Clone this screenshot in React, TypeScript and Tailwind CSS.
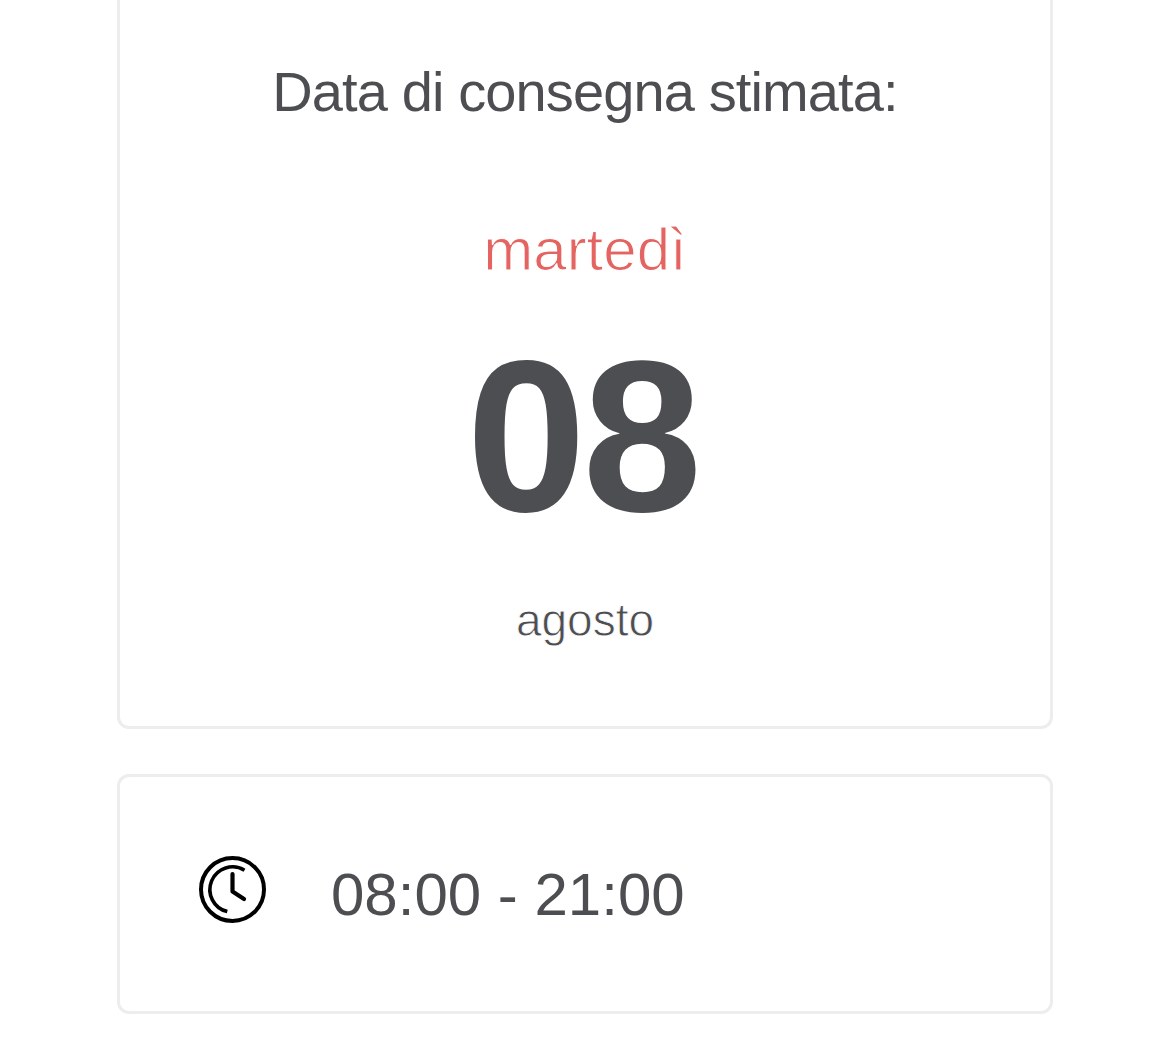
function ClockIcon() {
  return (
    <svg viewBox="0 0 68 68" className="mb-[10px] h-[68px] w-[68px] shrink-0 text-black" fill="none" stroke="currentColor" strokeWidth="4" aria-hidden="true">
      <circle cx="34.5" cy="34.5" r="31.5" />
      <path d="M46.5 15.2A22.7 22.7 0 1 0 29.3 56.6" strokeWidth="3.6" />
      <path d="M34.5 19V36.5L46 44" strokeWidth="4.2" strokeLinecap="round" strokeLinejoin="round" />
    </svg>
  );
}

function DeliveryDate() {
  return (
    <section className="flex h-[729px] flex-col items-center rounded-b-xl border-3 border-t-0 border-[#ededed] pt-[60px]">
      <h1 className="text-[56px] leading-[64px] tracking-[-0.88px] whitespace-nowrap text-[#4d4e52]">
        Data di consegna stimata:
      </h1>
      {/* the white stroke thins the regular weight down to a light one */}
      <p className="mt-[90px] text-[60px] leading-[72px] text-[#e36460] [-webkit-text-stroke:1.1px_#fff]">
        martedì
      </p>
      <p className="mt-[31px] mr-[5px] text-[215px] leading-[240px] font-bold tracking-[-3.6px] text-[#4d4e52]">08</p>
      <p className="mt-[33px] text-[46px] leading-[60px] text-[#4d4e52] [-webkit-text-stroke:0.8px_#fff]">
        agosto
      </p>
    </section>
  );
}

function DeliveryTime() {
  return (
    <section className="mt-[45px] flex h-60 items-center rounded-xl border-3 border-[#ededed] pl-[78px]">
      <ClockIcon />
      <p className="mt-[2px] ml-[65px] text-[60px] leading-[72px] text-[#4d4e52]">08:00 - 21:00</p>
    </section>
  );
}

export default function App() {
  return (
    <main className="h-[1056px] overflow-hidden bg-white px-[117px] font-['Liberation_Sans',Arial,sans-serif]">
      <DeliveryDate />
      <DeliveryTime />
    </main>
  );
}
